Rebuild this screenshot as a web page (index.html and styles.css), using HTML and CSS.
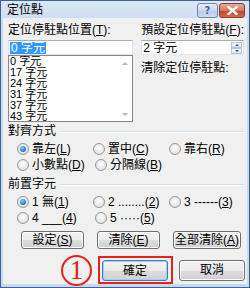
FILE: index.html
```html
<!DOCTYPE html>
<html lang="zh-Hant">
<head>
  <meta charset="UTF-8" />
  <title>定位點</title>
  <link rel="stylesheet" href="styles.css">
</head>
<body>
  <div class="window">
    <div class="titlebar">
      <span class="title">定位點</span>
      <div class="caption-btns">
        <span class="cap-btn help">?</span>
        <span class="cap-btn close">
          <svg width="11" height="9" viewBox="0 0 11 9"><path d="M1.5 1 L9.5 8 M9.5 1 L1.5 8" stroke="#fff" stroke-width="2.4" stroke-linecap="square"/></svg>
        </span>
      </div>
    </div>

    <div class="client">
      <div class="top">
        <div class="col-left">
          <div class="label">定位停駐點位置(<u>T</u>):</div>
          <div class="textbox"><span class="sel">0 字元</span></div>
          <div class="listbox">
            <ul class="items">
              <li>0 字元</li>
              <li>17 字元</li>
              <li>24 字元</li>
              <li>31 字元</li>
              <li>37 字元</li>
              <li>43 字元</li>
            </ul>
            <div class="scrollbar">
              <span class="arrow up"></span>
              <span class="arrow down"></span>
            </div>
          </div>
        </div>
        <div class="col-right">
          <div class="label">預設定位停駐點(<u>F</u>):</div>
          <div class="spinbox">
            <span>2 字元</span>
            <div class="spin">
              <span class="spin-btn"><i class="tri up"></i></span>
              <span class="spin-btn"><i class="tri down"></i></span>
            </div>
          </div>
          <div class="label clear-label">清除定位停駐點:</div>
        </div>
      </div>

      <div class="group">
        <div class="group-title"><span>對齊方式</span><i class="rule"></i></div>
        <div class="radio-row">
          <label class="radio checked"><i></i>靠左(<u>L</u>)</label>
          <label class="radio"><i></i>置中(<u>C</u>)</label>
          <label class="radio"><i></i>靠右(<u>R</u>)</label>
        </div>
        <div class="radio-row">
          <label class="radio"><i></i>小數點(<u>D</u>)</label>
          <label class="radio"><i></i>分隔線(<u>B</u>)</label>
        </div>
      </div>

      <div class="group">
        <div class="group-title"><span>前置字元</span><i class="rule"></i></div>
        <div class="radio-row">
          <label class="radio checked"><i></i>1 無(<u>1</u>)</label>
          <label class="radio"><i></i>2 ........(<u>2</u>)</label>
          <label class="radio"><i></i>3 ------(<u>3</u>)</label>
        </div>
        <div class="radio-row">
          <label class="radio"><i></i>4 ___(<u>4</u>)</label>
          <label class="radio"><i></i>5 ·····(<u>5</u>)</label>
        </div>
      </div>

      <div class="button-row">
        <button class="btn">設定(<u>S</u>)</button>
        <button class="btn">清除(<u>E</u>)</button>
        <button class="btn wide">全部清除(<u>A</u>)</button>
      </div>

      <div class="bottom-row">
        <div class="mark"><span>1</span></div>
        <div class="highlight">
          <button class="btn big default">確定</button>
        </div>
        <button class="btn big">取消</button>
      </div>
    </div>
  </div>
</body>
</html>
```

FILE: styles.css
```css
body {
  margin: 0;
  padding: 0;
  font-family: "Liberation Sans", "Noto Sans CJK TC", sans-serif;
  font-size: 12px;
  color: #000;
}

.window {
  width: 250px;
  height: 288px;
  box-sizing: border-box;
  border: 1px solid #3f6290;
  background: linear-gradient(#dbe8f7, #c4d8f0 30px, #c6d9f0);
  display: flex;
  flex-direction: column;
  overflow: hidden;
}

.titlebar {
  height: 20px;
  display: flex;
  align-items: center;
  justify-content: space-between;
  padding: 0 4px 0 6px;
}

.title {
  font-size: 12px;
  line-height: 12px;
  margin-top: 1px;
}

.caption-btns {
  display: flex;
  gap: 1px;
  margin-top: 1px;
}

.cap-btn {
  height: 15px;
  box-sizing: border-box;
  border: 1px solid #6d86ad;
  border-radius: 3px;
  display: flex;
  align-items: center;
  justify-content: center;
}

.help {
  width: 21px;
  background: linear-gradient(#e6effa, #c9d9ef 50%, #b7cbe8 51%, #cbdcf2);
  color: #4b6790;
  font-family: "DejaVu Sans", sans-serif;
  font-size: 10px;
  font-weight: bold;
}

.close {
  width: 26px;
  border-color: #8b3a2c;
  background: linear-gradient(#e9a99a, #d47a65 50%, #c2462a 51%, #d26a4b);
}

.client {
  flex: 1;
  margin: 0 2px 3px 2px;
  background: #f0f0f0;
  padding: 6px 2px 0 5px;
  display: flex;
  flex-direction: column;
}

.label {
  line-height: 12px;
  height: 12px;
  white-space: nowrap;
}

u {
  text-decoration: underline;
  text-underline-offset: 1px;
}

.top {
  display: flex;
  gap: 8px;
}

.col-left {
  width: 135px;
}

.col-right {
  flex: 1;
  padding-right: 1px;
}

.textbox,
.spinbox {
  height: 15px;
  margin-top: 4px;
  box-sizing: border-box;
  border: 1px solid #abadb3;
  border-color: #abadb3 #dbdfe6 #e3e9ef #e2e3ea;
  background: #fff;
  display: flex;
  align-items: center;
  padding-left: 1px;
  line-height: 12px;
}

.sel {
  background: #3399ff;
  color: #fff;
  padding: 0 1px;
  line-height: 12px;
}

.listbox {
  height: 67px;
  box-sizing: border-box;
  border: 1px solid #828790;
  background: #fff;
  display: flex;
  overflow: hidden;
}

.items {
  list-style: none;
  margin: 0;
  padding: 0 0 0 1px;
  flex: 1;
}

.items li {
  height: 11px;
  line-height: 11px;
  font-size: 11px;
}

.scrollbar {
  width: 15px;
  display: flex;
  flex-direction: column;
  justify-content: space-between;
  align-items: center;
  padding: 6px 0 5px;
}

.arrow {
  width: 0;
  height: 0;
  border-left: 3px solid transparent;
  border-right: 3px solid transparent;
}

.arrow.up {
  border-bottom: 3px solid #b8b8b8;
}

.arrow.down {
  border-top: 3px solid #b8b8b8;
}

.spinbox {
  justify-content: space-between;
  padding-right: 1px;
}

.spin {
  display: flex;
  flex-direction: column;
  width: 11px;
  height: 12px;
}

.spin-btn {
  flex: 1;
  border: 1px solid #b5c5d8;
  background: linear-gradient(#f4f8fc, #dde7f3);
  display: flex;
  align-items: center;
  justify-content: center;
}

.tri {
  width: 0;
  height: 0;
  border-left: 2px solid transparent;
  border-right: 2px solid transparent;
}

.tri.up {
  border-bottom: 2px solid #3d5a85;
}

.tri.down {
  border-top: 2px solid #3d5a85;
}

.clear-label {
  margin-top: 7px;
}

.group {
  display: flex;
  flex-direction: column;
}

.group-title {
  display: flex;
  align-items: center;
  height: 12px;
  line-height: 12px;
  margin-top: 3px;
}

.group + .group .group-title {
  margin-top: 6px;
}

.rule {
  flex: 1;
  height: 0;
  border-top: 1px solid #d5dfe5;
  border-bottom: 1px solid #fff;
  margin: 1px 1px 0 4px;
}

.radio-row {
  display: flex;
  padding-left: 9px;
  height: 14px;
  align-items: center;
  margin-top: 2px;
}

.group-title + .radio-row {
  margin-top: 5px;
}

.radio {
  width: 78px;
  display: flex;
  align-items: center;
  white-space: nowrap;
  line-height: 12px;
}

.radio i {
  width: 12px;
  height: 12px;
  flex: none;
  box-sizing: border-box;
  border-radius: 50%;
  border: 1px solid #9a9a9a;
  background: radial-gradient(circle at 50% 40%, #ffffff, #e6e6e6 60%, #d2d2d2);
  margin-right: 3px;
  display: flex;
  align-items: center;
  justify-content: center;
}

.radio.checked i::after {
  content: "";
  width: 6px;
  height: 6px;
  border-radius: 50%;
  background: radial-gradient(circle at 40% 35%, #8fd1ff, #2a7ac6 60%, #1b4f95);
}

.btn {
  font-family: inherit;
  font-size: 12px;
  line-height: 12px;
  color: #000;
  height: 18px;
  padding: 0;
  box-sizing: border-box;
  border: 1px solid #707070;
  border-radius: 3px;
  background: linear-gradient(#f2f2f2, #ebebeb 50%, #dddddd 51%, #cfcfcf);
  box-shadow: inset 0 0 0 1px #fcfcfc;
}

.button-row {
  display: flex;
  margin-top: 6px;
  padding-left: 13px;
  gap: 13px;
}

.button-row .btn {
  width: 63px;
}

.button-row .btn.wide {
  width: 68px;
}

.bottom-row {
  display: flex;
  align-items: center;
  margin-top: 7px;
  height: 28px;
}

.mark {
  width: 31px;
  height: 31px;
  flex: none;
  box-sizing: border-box;
  border: 2px solid #e5231b;
  border-radius: 50%;
  margin-left: 53px;
  margin-right: 6px;
  display: flex;
  align-items: center;
  justify-content: center;
  font-family: "Liberation Serif", serif;
  font-size: 27px;
  line-height: 27px;
  color: #e5231b;
}

.highlight {
  border: 2px solid #e5231b;
  padding: 2px 3px 1px 2px;
  display: flex;
}

.btn.big {
  width: 66px;
  height: 21px;
}

.btn.default {
  border-color: #3c7fb1;
  box-shadow: inset 0 0 0 1px #93d4f5;
}

.highlight + .btn {
  margin-left: 6px;
}
```
